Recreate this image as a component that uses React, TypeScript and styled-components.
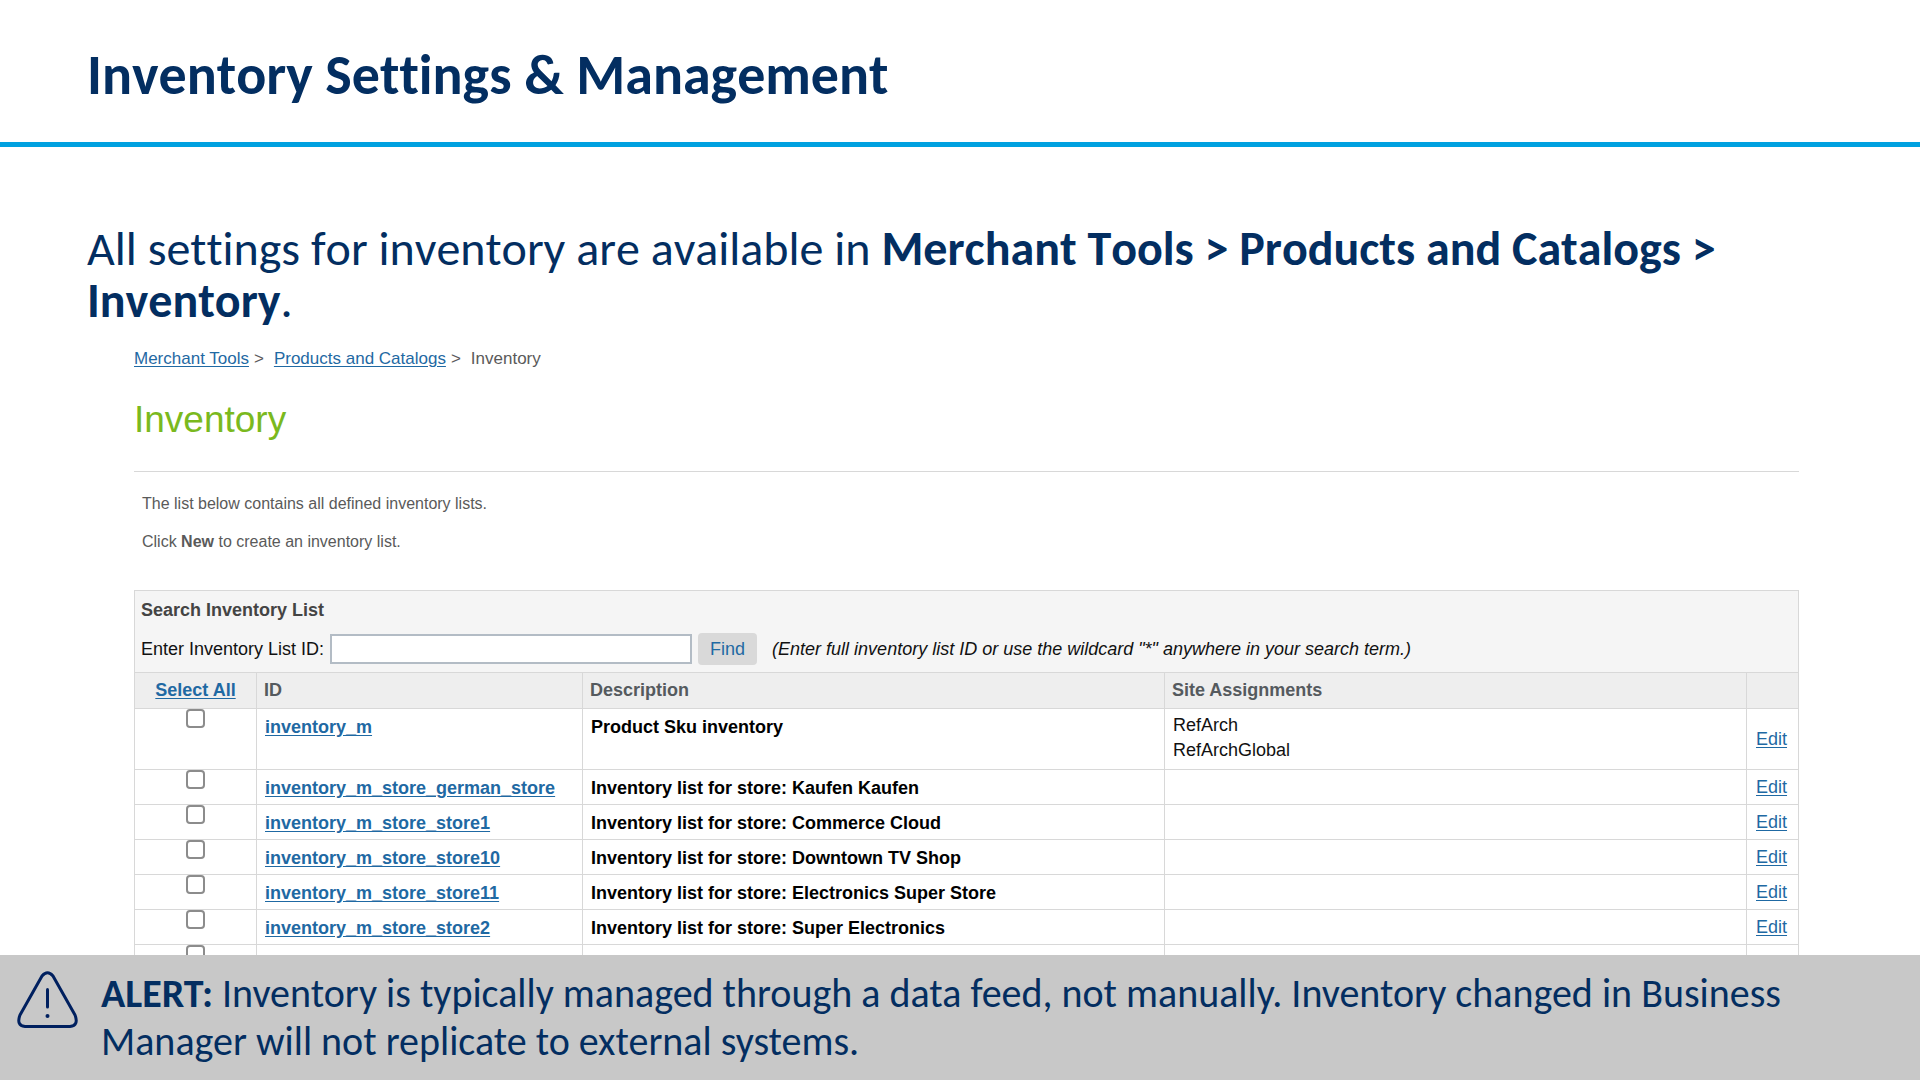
import React from "react";
import styled, { createGlobalStyle } from "styled-components";

const GlobalStyle = createGlobalStyle`
  * { box-sizing: border-box; }
  body { margin: 0; background: #fff; }
`;

const navy = "#032e61";
const link = "#1f69a3";
const line = "#d8d8d8";

const Page = styled.div`
  display: flex;
  flex-direction: column;
  height: 100vh;
  overflow: hidden;
  color: ${navy};
  font-family: Carlito, Calibri, Lato, sans-serif;
  font-variant-ligatures: none;
`;

const Header = styled.header`
  padding: 44px 87px 35px;
  border-bottom: 5px solid #00a1e0;
`;

const SlideTitle = styled.h1`
  margin: 0;
  font-size: 56px;
  line-height: 63px;
  font-weight: 700;
  font-kerning: none;
`;

const Main = styled.main`
  flex: 1;
  min-height: 0;
  overflow: hidden;
`;

const Lead = styled.p`
  margin: 0;
  padding: 76px 87px 0;
  font-size: 48px;
  line-height: 52px;
  font-kerning: none;
`;

const Panel = styled.section`
  margin: 20px 121px 0 134px;
  font-family: "Liberation Sans", Arial, sans-serif;
  color: #5a5a5a;
`;

const Link = styled.a`
  color: ${link};
  text-decoration: underline;
  text-underline-offset: 2px;
`;

const Breadcrumb = styled.nav`
  display: flex;
  font-size: 17px;
  line-height: 24px;
`;

const Separator = styled.span`
  padding: 0 10px 0 5px;
`;

const PanelTitle = styled.h2`
  margin: 0;
  padding: 28px 0 30px;
  border-bottom: 1px solid ${line};
  color: #7ab91e;
  font-size: 37px;
  line-height: 42px;
  font-weight: 400;
`;

const Intro = styled.div`
  display: grid;
  gap: 18px;
  padding: 22px 8px 38px;
  font-size: 16px;
  line-height: 20px;
`;

const IntroLine = styled.p`
  margin: 0;
`;

const SearchForm = styled.form`
  height: 82px;
  padding: 7px 6px 0;
  background: #f5f5f5;
  border: 1px solid ${line};
  border-bottom: 0;
  color: #111;
  font-size: 18px;
`;

const SearchTitle = styled.h3`
  margin: 0 0 11px;
  color: #444;
  font-size: 18px;
  line-height: 24px;
`;

const SearchRow = styled.div`
  display: flex;
  align-items: center;
`;

const SearchInput = styled.input`
  width: 362px;
  height: 30px;
  margin: 0 6px;
  padding: 2px 6px;
  border: 2px solid #b3bcc5;
  background: #fff;
  font: inherit;
`;

const FindButton = styled.button`
  width: 59px;
  height: 32px;
  padding: 0;
  border: 0;
  border-radius: 4px;
  background: #d9d9d9;
  color: ${link};
  font: inherit;
`;

const Hint = styled.em`
  margin-left: 15px;
`;

const Table = styled.table`
  width: 100%;
  table-layout: fixed;
  border-collapse: collapse;
  font-size: 18px;
  line-height: 25px;
  color: #111;
`;

const Col = styled.col<{ $width?: number }>`
  width: ${(p) => (p.$width ? `${p.$width}px` : "auto")};
`;

const HeadCell = styled.th<{ $center?: boolean }>`
  height: 36px;
  padding: 0 7px;
  border: 1px solid ${line};
  background: #eee;
  color: #555a5e;
  text-align: ${(p) => (p.$center ? "center" : "left")};
`;

const Row = styled.tr<{ $tall?: boolean }>`
  height: ${(p) => (p.$tall ? 61 : 35)}px;
`;

const Cell = styled.td<{ $strong?: boolean; $middle?: boolean }>`
  padding: ${(p) => (p.$middle ? "0 9px" : p.$strong ? "6px 8px 0" : "4px 8px 0")};
  border: 1px solid ${line};
  color: ${(p) => (p.$strong ? "#000" : "inherit")};
  font-weight: ${(p) => (p.$strong ? 700 : 400)};
  vertical-align: ${(p) => (p.$middle ? "middle" : "top")};
`;

const CheckCell = styled.td`
  padding: 0;
  border: 1px solid ${line};
  text-align: center;
  vertical-align: top;
`;

const Check = styled.input`
  appearance: none;
  display: block;
  width: 19px;
  height: 19px;
  margin: 0 auto;
  border: 2px solid #8c8c8c;
  border-radius: 4px;
  background: #fff;
`;

const Alert = styled.aside`
  display: flex;
  gap: 23px;
  padding: 15px 100px 14px 16px;
  background: #c8c8c8;
  font-size: 40px;
  line-height: 48px;
`;

const AlertIcon = styled.svg`
  flex: none;
  width: 62px;
  height: 60px;
`;

const AlertText = styled.p`
  margin: 0;
`;

type Item = { id: string; description: string; sites?: string[] };

const items: Item[] = [
  { id: "inventory_m", description: "Product Sku inventory", sites: ["RefArch", "RefArchGlobal"] },
  { id: "inventory_m_store_german_store", description: "Inventory list for store: Kaufen Kaufen" },
  { id: "inventory_m_store_store1", description: "Inventory list for store: Commerce Cloud" },
  { id: "inventory_m_store_store10", description: "Inventory list for store: Downtown TV Shop" },
  { id: "inventory_m_store_store11", description: "Inventory list for store: Electronics Super Store" },
  { id: "inventory_m_store_store2", description: "Inventory list for store: Super Electronics" },
];

export default function App() {
  return (
    <Page>
      <GlobalStyle />
      <Header>
        <SlideTitle>Inventory Settings &amp; Management</SlideTitle>
      </Header>
      <Main>
        <Lead>
          All settings for inventory are available in{" "}
          <b>Merchant Tools &gt; Products and Catalogs &gt; Inventory</b>.
        </Lead>
        <Panel>
          <Breadcrumb aria-label="Breadcrumb">
            <Link href="#tools">Merchant Tools</Link>
            <Separator>&gt;</Separator>
            <Link href="#catalogs">Products and Catalogs</Link>
            <Separator>&gt;</Separator>
            <span>Inventory</span>
          </Breadcrumb>
          <PanelTitle>Inventory</PanelTitle>
          <Intro>
            <IntroLine>The list below contains all defined inventory lists.</IntroLine>
            <IntroLine>
              Click <b>New</b> to create an inventory list.
            </IntroLine>
          </Intro>
          <SearchForm onSubmit={(e) => e.preventDefault()}>
            <SearchTitle>Search Inventory List</SearchTitle>
            <SearchRow>
              <label htmlFor="list-id">Enter Inventory List ID:</label>
              <SearchInput id="list-id" type="text" />
              <FindButton type="submit">Find</FindButton>
              <Hint>
                (Enter full inventory list ID or use the wildcard "*" anywhere in your search term.)
              </Hint>
            </SearchRow>
          </SearchForm>
          <Table>
            <colgroup>
              <Col $width={122} />
              <Col $width={326} />
              <Col />
              <Col />
              <Col $width={52} />
            </colgroup>
            <thead>
              <tr>
                <HeadCell $center>
                  <Link href="#all">Select All</Link>
                </HeadCell>
                <HeadCell>ID</HeadCell>
                <HeadCell>Description</HeadCell>
                <HeadCell>Site Assignments</HeadCell>
                <HeadCell />
              </tr>
            </thead>
            <tbody>
              {items.map((item) => (
                <Row key={item.id} $tall={!!item.sites}>
                  <CheckCell>
                    <Check type="checkbox" aria-label={item.id} />
                  </CheckCell>
                  <Cell $strong>
                    <Link href={`#${item.id}`}>{item.id}</Link>
                  </Cell>
                  <Cell $strong>{item.description}</Cell>
                  <Cell>
                    {item.sites?.map((site) => (
                      <div key={site}>{site}</div>
                    ))}
                  </Cell>
                  <Cell $middle>
                    <Link href={`#edit-${item.id}`}>Edit</Link>
                  </Cell>
                </Row>
              ))}
              <Row>
                <CheckCell>
                  <Check type="checkbox" aria-label="Next inventory list" />
                </CheckCell>
                <Cell />
                <Cell />
                <Cell />
                <Cell />
              </Row>
            </tbody>
          </Table>
        </Panel>
      </Main>
      <Alert role="alert">
        <AlertIcon viewBox="0 0 62 60" fill="none" stroke="#00205f" strokeWidth="3" aria-hidden="true">
          <path
            d="M26 6 Q31.500 -0.500 37 6 L59 45 Q63 55.500 54 56.500 H9 Q0 55.500 4 45 Z"
            strokeLinejoin="round"
          />
          <path d="M31.500 19.500 V37" strokeLinecap="round" />
          <circle cx="31.500" cy="46" r="2" fill="#00205f" stroke="none" />
        </AlertIcon>
        <AlertText>
          <b>ALERT:</b> Inventory is typically managed through a data feed, not manually. Inventory
          changed in Business Manager will not replicate to external systems.
        </AlertText>
      </Alert>
    </Page>
  );
}
